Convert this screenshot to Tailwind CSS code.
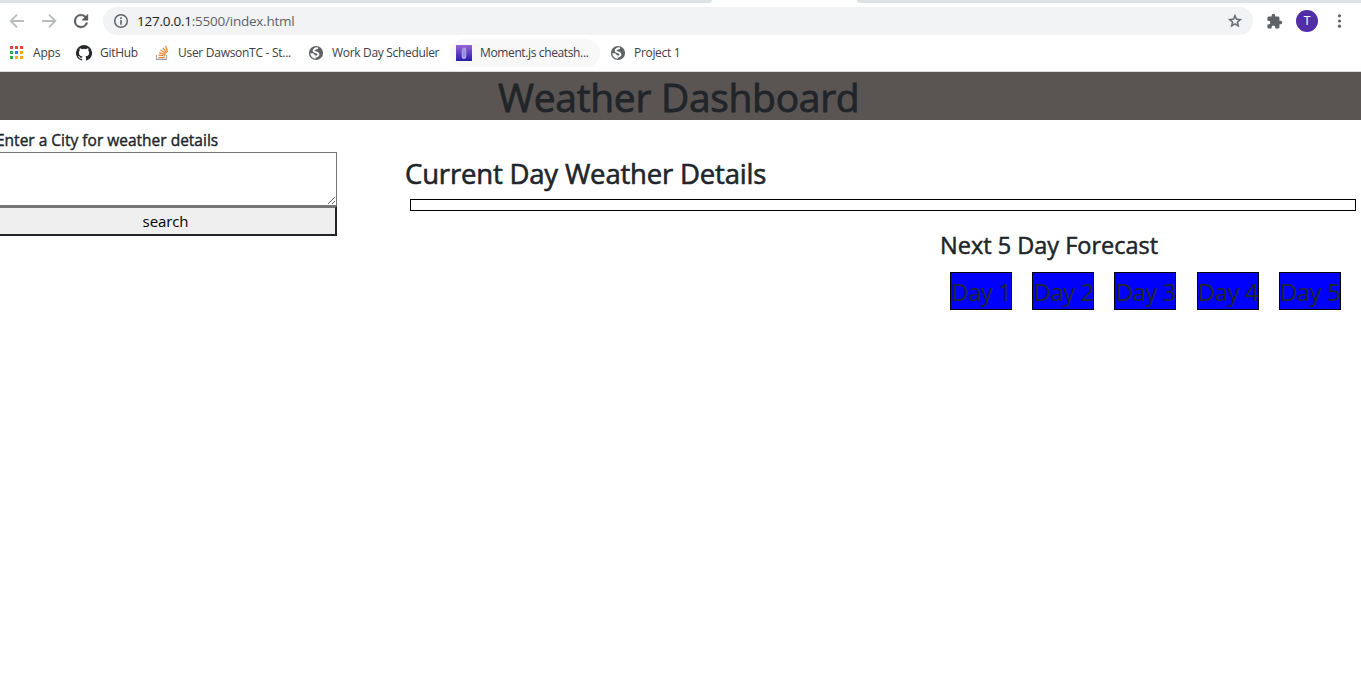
<!DOCTYPE html>
<html lang="en">
<head>
<meta charset="utf-8">
<title>Weather Dashboard</title>
<script src="https://cdn.jsdelivr.net/npm/@tailwindcss/browser@4"></script>
</head>
<body class="h-[681px] w-[1361px] overflow-hidden bg-white font-['Segoe_UI','Open_Sans',sans-serif] text-[#212529]">
<!-- Browser chrome -->
<div class="flex h-[72px] flex-col border-b border-[#dadce0] bg-white">
  <div class="flex h-[3px] shrink-0 justify-between">
    <div class="w-[712px] rounded-br-[4px] bg-[#dee1e6]"></div>
    <div class="w-[504px] rounded-bl-[4px] bg-[#dee1e6]"></div>
  </div>
  <div class="mt-1 flex h-7 shrink-0 items-center">
    <svg class="ml-2 size-[18px] shrink-0" viewBox="0 0 18 18" fill="none" stroke="#babcbe" stroke-width="1.9"><path d="M16 9H3M9 2.6 2.7 9 9 15.4"/></svg>
    <svg class="ml-[14px] size-[18px] shrink-0" viewBox="0 0 18 18" fill="none" stroke="#babcbe" stroke-width="1.9"><path d="M2 9h13M9 2.6 15.3 9 9 15.4"/></svg>
    <svg class="ml-[11px] size-[24px] shrink-0" viewBox="0 0 24 24"><g transform="translate(1.7 1.7) scale(.86)"><path fill="#54575b" d="M17.65 6.35A7.96 7.96 0 0 0 12 4a8 8 0 1 0 7.73 10h-2.08A6 6 0 1 1 12 6c1.66 0 3.14.69 4.22 1.78L13 11h7V4z" stroke="#54575b" stroke-width=".5"/></g></svg>
    <div class="ml-[10px] flex h-7 w-[1150px] items-center rounded-full bg-[#f1f3f4] pr-[10px] pl-[10px]">
      <svg class="size-4 shrink-0" viewBox="0 0 16 16"><circle cx="8" cy="8" r="6.3" fill="none" stroke="#5f6368" stroke-width="1.5"/><path fill="#5f6368" d="M7.2 4.3h1.6v1.6H7.2zM7.2 7h1.6v4.7H7.2z"/></svg>
      <span class="ml-[8px] text-[13.5px] leading-7 tracking-[-0.24px] whitespace-nowrap text-[#5f6368]"><span class="text-[#202124]">127.0.0.1</span>:5500/index.html</span>
      <svg class="ml-auto size-4 shrink-0" viewBox="0 0 24 24" fill="#5f6368"><path d="m22 9.24-7.19-.62L12 2 9.19 8.63 2 9.24l5.46 4.73L5.82 21 12 17.27 18.18 21l-1.63-7.03zM12 15.4l-3.76 2.27 1-4.28-3.32-2.88 4.38-.38L12 6.1l1.71 4.04 4.38.38-3.32 2.88 1 4.28z" stroke="#5f6368" stroke-width=".6"/></svg>
    </div>
    <svg class="ml-[13px] size-[17px] shrink-0" viewBox="0 0 24 24" fill="#5f6368"><path d="M20.5 11H19V7a2 2 0 0 0-2-2h-4V3.5a2.5 2.5 0 0 0-5 0V5H4a2 2 0 0 0-2 2v3.8h1.5a2.7 2.7 0 0 1 0 5.4H2V20c0 1.1.9 2 2 2h3.8v-1.5a2.7 2.7 0 0 1 5.4 0V22H17a2 2 0 0 0 2-2v-4h1.5a2.5 2.5 0 0 0 0-5z"/></svg>
    <div class="ml-[13px] flex size-[22px] shrink-0 items-center justify-center rounded-full bg-[#512da8] font-[Roboto] text-[12px] leading-none text-white">T</div>
    <svg class="ml-[19px] h-4 w-[5px] shrink-0" viewBox="0 0 5 16" fill="#5f6368"><circle cx="2.5" cy="2.8" r="1.6"/><circle cx="2.5" cy="8" r="1.6"/><circle cx="2.5" cy="13.2" r="1.6"/></svg>
  </div>
  <div class="mt-1 flex h-7 shrink-0 items-center text-[12px] leading-7 tracking-[-0.32px] whitespace-nowrap text-[#3c4043]">
    <div class="flex w-[76px] items-center pl-[10px]">
      <svg class="-mt-px size-[13px] shrink-0" viewBox="0 0 13 13" shape-rendering="crispEdges"><path fill="#ea4335" d="M0 0h3v3H0zM5 0h3v3H5zM10 0h3v3h-3z"/><path fill="#34a853" d="M0 5h3v3H0zM0 10h3v3H0z"/><path fill="#2485fc" d="M5 5h3v3H5z"/><path fill="#f9ab00" d="M10 5h3v3h-3zM5 10h3v3H5zM10 10h3v3h-3z"/></svg>
      <span class="ml-[10px] tracking-[-0.2px]">Apps</span>
    </div>
    <div class="flex w-[79px] items-center">
      <svg class="size-4 shrink-0" viewBox="0 0 16 16" fill="#24292e"><path d="M8 0a8 8 0 0 0-2.53 15.59c.4.07.55-.17.55-.38v-1.49c-2.01.37-2.53-.49-2.69-.94-.09-.23-.48-.94-.82-1.13-.28-.15-.68-.52-.01-.53.63-.01 1.08.58 1.23.82.72 1.21 1.87.87 2.33.66.07-.52.28-.87.51-1.07-1.78-.2-3.64-.89-3.64-3.95 0-.87.31-1.59.82-2.15-.08-.2-.36-1.02.08-2.12 0 0 .67-.21 2.2.82a7.4 7.4 0 0 1 4 0c1.53-1.04 2.2-.82 2.2-.82.44 1.1.16 1.92.08 2.12.51.56.82 1.27.82 2.15 0 3.07-1.87 3.75-3.65 3.95.29.25.54.73.54 1.48v2.2c0 .21.15.46.55.38A8 8 0 0 0 8 0z"/></svg>
      <span class="ml-[8px] tracking-[-0.3px]">GitHub</span>
    </div>
    <div class="flex w-[153px] items-center">
      <svg class="size-4 shrink-0" viewBox="0 0 16 16" fill="none"><path d="M1.5 10v4.4h10V10" stroke="#a0a4a8" stroke-width="1.1"/><path d="M3.3 12.6h6.4M3.5 10.2l6.3.7M4.2 7.7l6 1.9M5.6 5.1l5.2 3.4M8 2.8l3.7 5M10.6 1l2 5.9" stroke="#f08534" stroke-width="1.25"/></svg>
      <span class="ml-[7px] tracking-[-0.28px]">User DawsonTC - St...</span>
    </div>
    <div class="flex w-[142px] items-center">
      <svg class="size-4 shrink-0" viewBox="0 0 16 16"><circle cx="8" cy="8" r="7.1" fill="#5f6368"/><path d="M9.2 3.2C6.8 3.4 5.4 4.6 5.6 5.9c.2 1.4 2.6 1.3 4 2.1 1.5.9 1 2.6-.8 3.5" fill="none" stroke="#fff" stroke-width="1.9" stroke-linecap="round"/><path d="M2.3 8.3h2.9l1.6 1.6 1 .4v3.4C4.8 13.6 2.4 11.3 2.3 8.3z" fill="#fff"/></svg>
      <span class="ml-[8px]">Work Day Scheduler</span>
    </div>
    <div class="flex h-7 w-[150px] items-center rounded-full bg-[#f8f8f9] pl-[6px]">
      <svg class="size-4 shrink-0" viewBox="0 0 16 16"><defs><linearGradient id="g" x2="0" y2="1"><stop stop-color="#9366d8"/><stop offset="1" stop-color="#2a1ba8"/></linearGradient></defs><path fill="url(#g)" d="M0 0h16v16H0z"/><rect x="5.7" y="2.5" width="4.6" height="11.5" rx="2.3" fill="#aaa0e6"/><path d="M8 5.5v6M7 3.6v1.6" stroke="#7d6bd0" stroke-width=".8"/></svg>
      <span class="ml-[8px] tracking-[-0.37px]">Moment.js cheatsh...</span>
    </div>
    <div class="flex items-center pl-[10px]">
      <svg class="size-4 shrink-0" viewBox="0 0 16 16"><circle cx="8" cy="8" r="7.1" fill="#5f6368"/><path d="M9.2 3.2C6.8 3.4 5.4 4.6 5.6 5.9c.2 1.4 2.6 1.3 4 2.1 1.5.9 1 2.6-.8 3.5" fill="none" stroke="#fff" stroke-width="1.9" stroke-linecap="round"/><path d="M2.3 8.3h2.9l1.6 1.6 1 .4v3.4C4.8 13.6 2.4 11.3 2.3 8.3z" fill="#fff"/></svg>
      <span class="ml-[8px]">Project 1</span>
    </div>
  </div>
</div>
<!-- Page -->
<header class="h-12 bg-[#5a5553] pl-[498px]">
  <h1 class="text-[39px] leading-[50px] tracking-[-0.31px] whitespace-nowrap [-webkit-text-stroke:0.8px]">Weather Dashboard</h1>
</header>
<main class="flex">
  <section class="-ml-[4px] w-[341px] pt-2">
    <label class="block h-6 text-[15.5px] leading-6 whitespace-nowrap [-webkit-text-stroke:0.4px]">Enter a City for weather details</label>
    <textarea class="block h-[54px] w-full resize border border-[#767676] bg-white outline-none"></textarea>
    <button class="block h-[30px] w-full border-2 border-t-[#767676] border-r-[#212529] border-b-[#212529] border-l-[#767676] bg-[#efefef] pr-[2px] text-center text-[15px] leading-[26px] tracking-[-0.1px] text-black">search</button>
  </section>
  <section class="ml-[68px] w-[956px] pt-[37px]">
    <h3 class="h-[34px] text-[27.5px] leading-[34px] tracking-[-0.18px] whitespace-nowrap [-webkit-text-stroke:0.6px]">Current Day Weather Details</h3>
    <div class="mt-[8px] ml-[5px] h-[12px] w-[946px] border border-black"></div>
    <div class="mt-[20px] ml-[535px]">
      <h4 class="h-[29px] text-[23.5px] leading-[29px] whitespace-nowrap [-webkit-text-stroke:0.5px]">Next 5 Day Forecast</h4>
      <div class="mt-[12px] ml-[10px] flex gap-[20.2px] text-[24px] leading-[38px] tracking-[-0.45px] whitespace-nowrap">
        <div class="h-[38px] w-[62px] border border-black bg-[#0000ff]">Day 1</div>
        <div class="h-[38px] w-[62px] border border-black bg-[#0000ff]">Day 2</div>
        <div class="h-[38px] w-[62px] border border-black bg-[#0000ff]">Day 3</div>
        <div class="h-[38px] w-[62px] border border-black bg-[#0000ff]">Day 4</div>
        <div class="h-[38px] w-[62px] border border-black bg-[#0000ff]">Day 5</div>
      </div>
    </div>
  </section>
</main>
</body>
</html>
